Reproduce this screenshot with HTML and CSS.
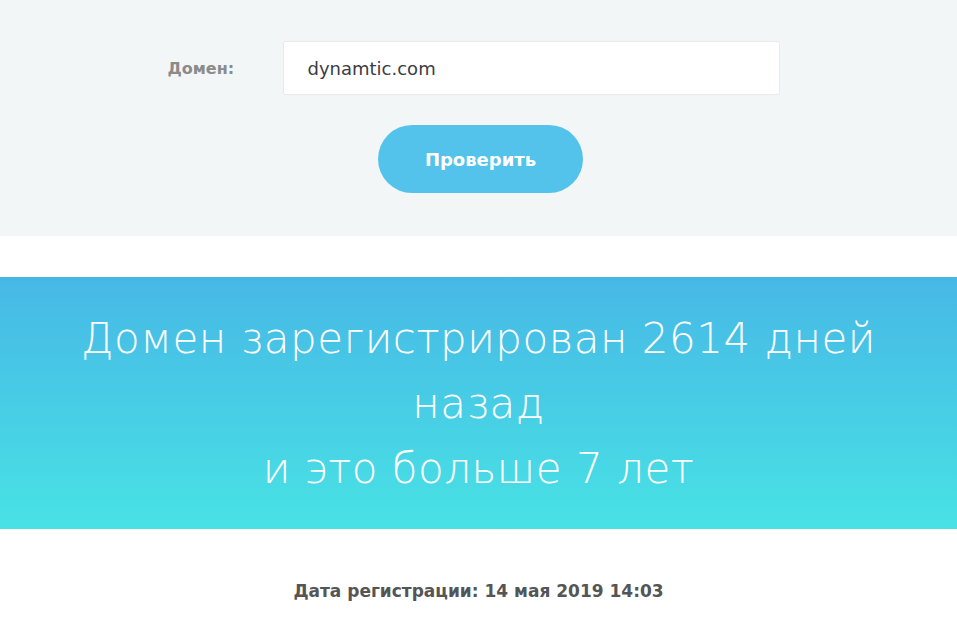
FILE: index.html
```html
<!DOCTYPE html>
<html lang="ru">
<head>
    <meta charset="UTF-8">
    <meta name="viewport" content="width=device-width, initial-scale=1.0">
    <title>Проверка возраста домена</title>
    <link rel="stylesheet" href="styles.css">
</head>
<body>
    <section class="check">
        <form class="check-form">
            <div class="field">
                <label for="domain">Домен:</label>
                <input id="domain" value="dynamtic.com">
            </div>
            <button type="submit">Проверить</button>
        </form>
    </section>

    <section class="result">
        <h1>Домен зарегистрирован 2614 дней назад<br>и это больше 7 лет</h1>
    </section>

    <p class="reg-date">Дата регистрации: 14 мая 2019 14:03</p>
</body>
</html>
```

FILE: styles.css
```css
body{
    margin:0;
    font-family: "DejaVu Sans", "Open Sans", sans-serif;
    background:#fff;
    color:#555;
}

.check{
    background:#f3f6f7;
    height:236px;
    box-sizing:border-box;
    padding-top:41px;
}

.check-form{
    display:flex;
    flex-direction:column;
    align-items:center;
    gap:30px;
}

.field{
    display:flex;
    align-items:center;
    margin-left:-10px;

    label{
        width:115px;
        font-size:16px;
        font-weight:700;
        color:#8b8b8b;
    }

    input{
        width:497px;
        height:54px;
        box-sizing:border-box;
        border:1px solid #e8eaeb;
        border-radius:2px;
        background:#fff;
        padding:0 24px;
        font-family:inherit;
        font-size:18px;
        color:#3c3c44;
        outline:none;
    }
}

button{
    width:205px;
    height:68px;
    margin-left:4px;
    border:0;
    border-radius:34px;
    background:#53c3ec;
    color:#fff;
    font-family:inherit;
    font-size:18px;
    font-weight:700;
    cursor:pointer;
}

.result{
    margin-top:41px;
    height:252px;
    background:linear-gradient(to bottom, #47b8e6, #48e2e5);
    display:flex;
    justify-content:center;
    align-items:center;

    h1{
        margin:0;
        width:830px;
        font-size:42px;
        font-weight:300;
        letter-spacing:0.5px;
        line-height:65px;
        text-align:center;
        color:#fff;
    }
}

.reg-date{
    margin:52px 0 0;
    text-align:center;
    font-size:17px;
    font-weight:700;
    color:#555;
}
```
